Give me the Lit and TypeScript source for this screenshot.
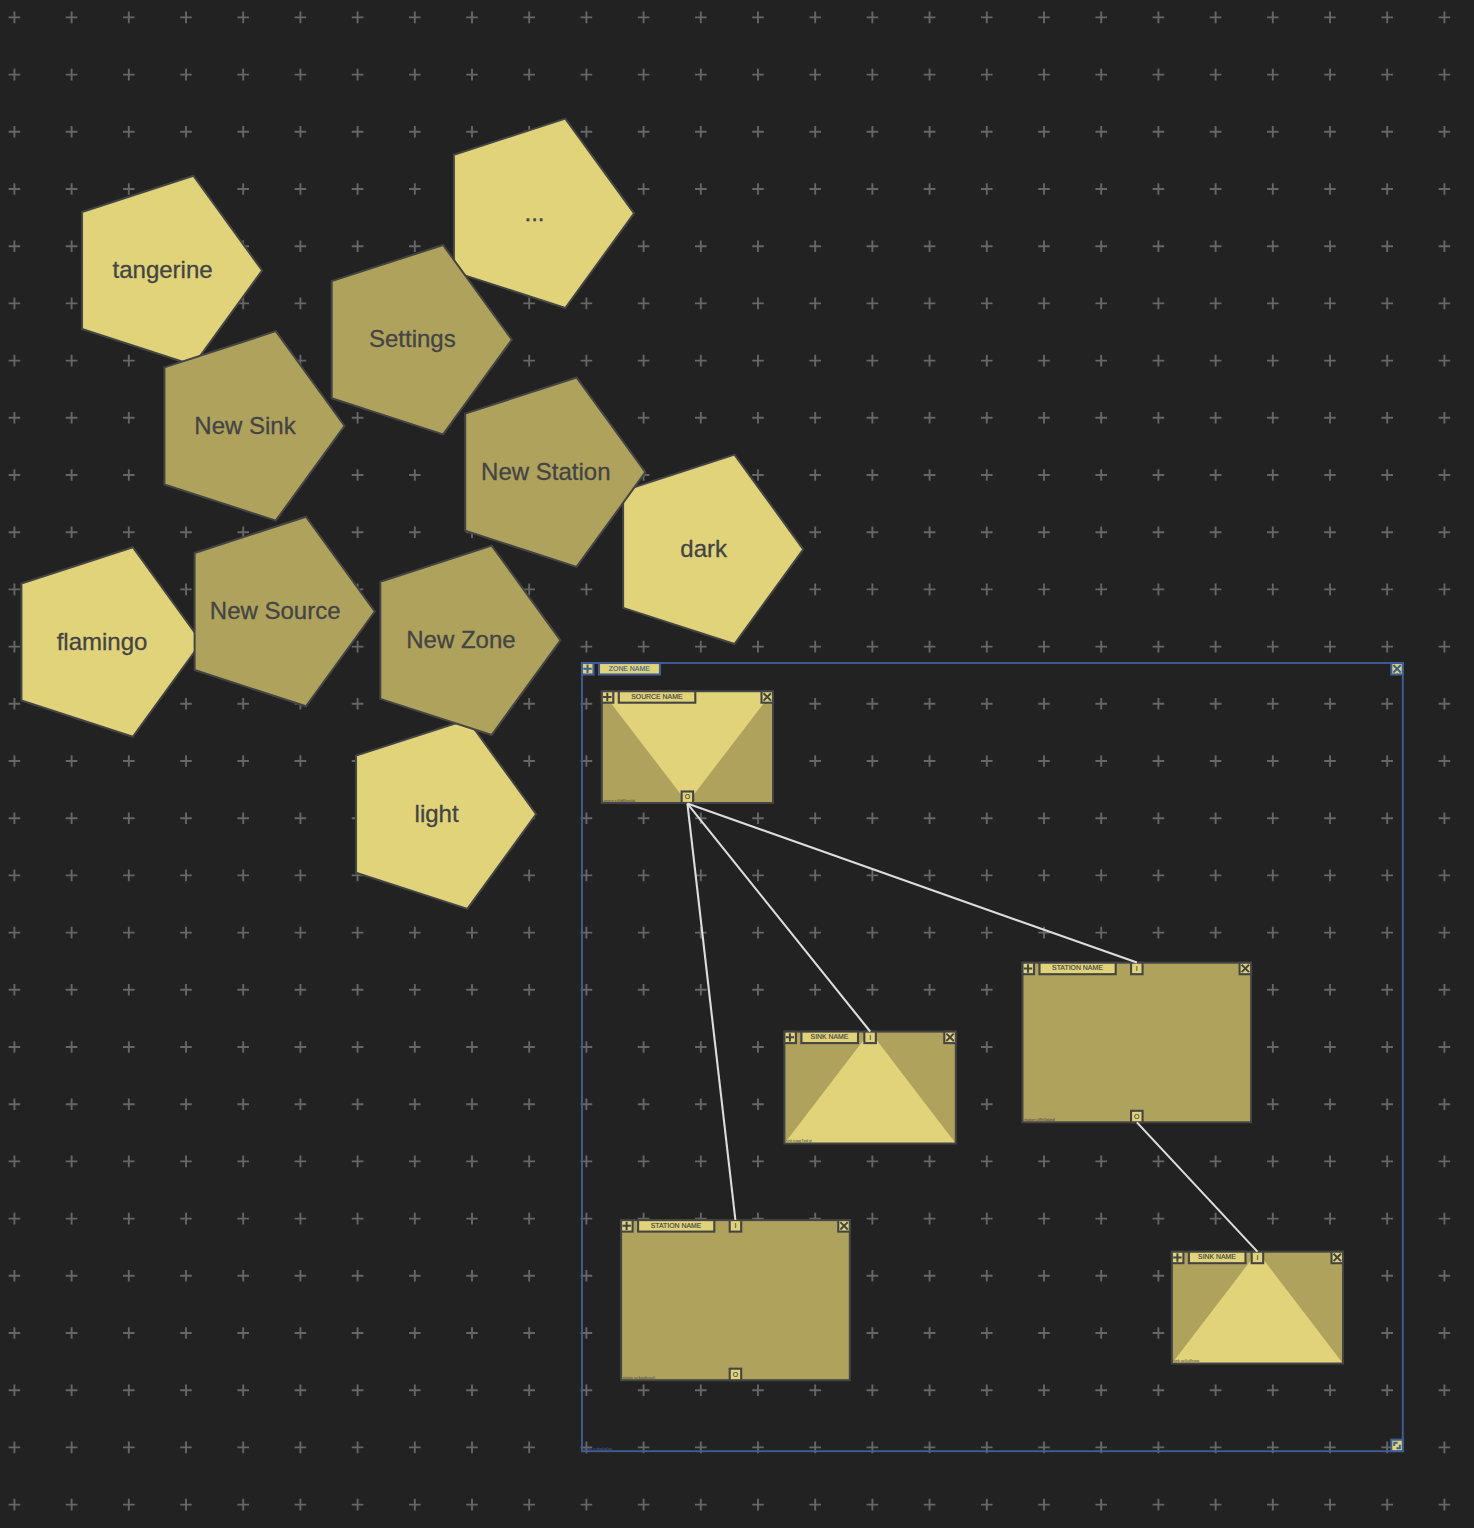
import { LitElement, css, svg, html } from "lit";
import { customElement } from "lit/decorators.js";

type Kind = "zone" | "source" | "sink" | "station";

interface Box {
  kind: Kind;
  x: number;
  y: number;
  w: number;
  h: number;
  label: string;
  labelWidth: number;
  id: string;
  idWidth: number;
}

interface Menu {
  x: number;
  y: number;
  text: string;
  leaf?: boolean;
}

const GRID = 57.2;
const HANDLE = 11.5;
const RADIUS = 99.6;

const menus: Menu[] = [
  { x: 534.5, y: 213.3, text: "...", leaf: true },
  { x: 162.6, y: 270.5, text: "tangerine", leaf: true },
  { x: 703.7, y: 549.3, text: "dark", leaf: true },
  { x: 102, y: 642, text: "flamingo", leaf: true },
  { x: 436.6, y: 814.2, text: "light", leaf: true },
  { x: 412.3, y: 339.7, text: "Settings" },
  { x: 245, y: 425.9, text: "New Sink" },
  { x: 545.8, y: 472.2, text: "New Station" },
  { x: 275.2, y: 611.5, text: "New Source" },
  { x: 460.9, y: 640.3, text: "New Zone" },
];

const boxes: Box[] = [
  { kind: "zone", x: 582, y: 663, w: 820.8, h: 788.2, label: "ZONE NAME", labelWidth: 61, id: "zone:x:dqplq0xx", idWidth: 29 },
  { kind: "source", x: 601.8, y: 691.2, w: 171.2, h: 111.8, label: "SOURCE NAME", labelWidth: 76.5, id: "source:x:f0df0hzx0d", idWidth: 31.5 },
  { kind: "sink", x: 784.4, y: 1031.6, w: 171.4, h: 111.9, label: "SINK NAME", labelWidth: 56.6, id: "sink:ojqqj7wd:yt", idWidth: 26 },
  { kind: "station", x: 1022.5, y: 962.7, w: 228.6, h: 159.6, label: "STATION NAME", labelWidth: 76.2, id: "station:ul8hl0dgtpl", idWidth: 31 },
  { kind: "station", x: 621.1, y: 1220.1, w: 228.7, h: 160.1, label: "STATION NAME", labelWidth: 76.2, id: "station:xz:bzwbuaz0", idWidth: 32.5 },
  { kind: "sink", x: 1171.9, y: 1251.7, w: 171.1, h: 111.8, label: "SINK NAME", labelWidth: 56.6, id: "sink:xz0ia8nww", idWidth: 26 },
];

const links = [
  [687.4, 803.6, 735.4, 1220],
  [687.4, 803.6, 870.2, 1031.5],
  [687.4, 803.6, 1136.9, 962.6],
  [1136.9, 1122.4, 1257.4, 1251.6],
];

@customElement("app-root")
export class AppRoot extends LitElement {
  static styles = css`
    :host {
      display: block;
      width: 1474px;
      height: 1528px;
      overflow: hidden;
      background: #222;
    }
    .canvas {
      display: block;
      font-family: "Liberation Sans", Arial, sans-serif;
    }
    .mark { stroke: #666; stroke-width: 1.9; fill: none; }
    .menu { fill: #afa25c; stroke: #444; stroke-width: 2; }
    .menu.leaf { fill: #e0d37a; }
    .menu-text { fill: #444; stroke: #444; stroke-width: 0.3; font-size: 24px; text-anchor: middle; }
    .node { --ink: #444; }
    .node.zone { --ink: #3f5f94; }
    .body { fill: #afa25c; }
    .zone .body { fill: none; }
    .wedge { fill: #e0d37a; }
    .frame { fill: none; stroke: var(--ink); stroke-width: 2; }
    .tab { fill: #e0d37a; stroke: var(--ink); stroke-width: 2.1; }
    .zone .frame { stroke-width: 1.9; }
    .glyph { fill: none; stroke: var(--ink); stroke-width: 2; }
    .label { fill: var(--ink); stroke: var(--ink); stroke-width: 0.15; font-size: 6.9px; text-anchor: middle; }
    .ident { fill: var(--ink); font-size: 3.6px; }
    .link { stroke: #ddd; stroke-width: 2.1; }
  `;

  private marks() {
    let d = "";
    for (let r = 0; r < 27; r++) {
      for (let c = 0; c < 26; c++) {
        const x = (14.4 + c * GRID).toFixed(1);
        const y = (17.4 + r * GRID).toFixed(1);
        d += `M${x} ${y}m-5.8 0h11.6m-5.8 -5.8v11.6`;
      }
    }
    return svg`<path class="mark" d=${d}></path>`;
  }

  private menu(m: Menu) {
    const pts = [0, 1, 2, 3, 4]
      .map((i) => {
        const a = (i * 2 * Math.PI) / 5;
        return `${(m.x + RADIUS * Math.cos(a)).toFixed(2)},${(m.y + RADIUS * Math.sin(a)).toFixed(2)}`;
      })
      .join(" ");
    return svg`
      <polygon class="menu ${m.leaf ? "leaf" : ""}" points=${pts}></polygon>
      <text class="menu-text" x=${m.x} y=${m.y + 7.6}>${m.text}</text>`;
  }

  private tab(x: number, y: number, w = HANDLE) {
    return svg`<rect class="tab" x=${x} y=${y} width=${w} height=${HANDLE}></rect>`;
  }

  private port(cx: number, y: number, text: string) {
    return svg`${this.tab(cx - HANDLE / 2, y)}
      <text class="label" x=${cx} y=${y + 7.9}>${text}</text>`;
  }

  private box(b: Box) {
    const { x, y, w, h } = b;
    const cx = x + w / 2;
    const right = x + w;
    const bottom = y + h;
    const xc = right - HANDLE / 2;
    const yc = y + HANDLE / 2;
    const rc = bottom - HANDLE / 2;
    const wedge =
      b.kind === "source"
        ? `M${x} ${y}H${right}L${cx} ${bottom}Z`
        : b.kind === "sink"
          ? `M${x} ${bottom}H${right}L${cx} ${y}Z`
          : "";
    return svg`<g class="node ${b.kind}">
      <rect class="body" x=${x} y=${y} width=${w} height=${h}></rect>
      <path class="wedge" d=${wedge}></path>
      <rect class="frame" x=${x} y=${y} width=${w} height=${h}></rect>
      <text class="ident" x=${x + 1.4} y=${bottom - 1.4} textLength=${b.idWidth} lengthAdjust="spacingAndGlyphs">${b.id}</text>
      ${this.tab(x, y)}
      <path class="glyph" d="M${x + 5.5} ${yc}m-4.2 0h8.4m-4.2 -4.2v8.4"></path>
      ${this.tab(x + 17, y, b.labelWidth)}
      <text class="label" x=${x + 16.8 + b.labelWidth / 2} y=${y + 7.6}>${b.label}</text>
      ${this.tab(right - HANDLE, y)}
      <path class="glyph" d="M${xc} ${yc}m-3.7 -3.7l7.4 7.4m0 -7.4l-7.4 7.4"></path>
      ${b.kind === "sink" || b.kind === "station" ? this.port(cx, y, "I") : ""}
      ${b.kind === "source" || b.kind === "station" ? this.port(cx, bottom - HANDLE, "O") : ""}
      ${b.kind === "zone"
        ? svg`${this.tab(right - HANDLE, bottom - HANDLE)}
          <path class="glyph" d="M${xc + 0.6} ${rc - 2.8}h-3.4v3.4M${xc + 2.8} ${rc - 0.6}v3.4h-3.4"></path>`
        : ""}
    </g>`;
  }

  render() {
    return html`<svg class="canvas" width="1474" height="1528" viewBox="0 0 1474 1528">
      ${this.marks()}
      ${menus.map((m) => this.menu(m))}
      ${boxes.map((b) => this.box(b))}
      ${links.map(([a, b, c, d]) => svg`<line class="link" x1=${a} y1=${b} x2=${c} y2=${d}></line>`)}
    </svg>`;
  }
}
